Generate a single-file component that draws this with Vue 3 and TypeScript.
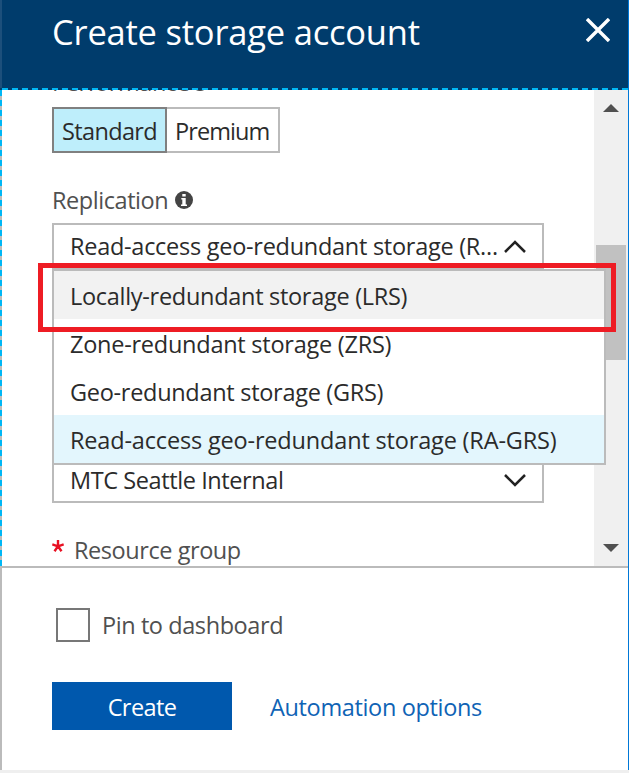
<script setup lang="ts">
import { ref } from 'vue'

interface Option {
  code: string
  label: string
}

const tiers: string[] = ['Standard', 'Premium']
const tier = ref('Standard')
const options: Option[] = [
  { code: 'lrs', label: 'Locally-redundant storage (LRS)' },
  { code: 'zrs', label: 'Zone-redundant storage (ZRS)' },
  { code: 'grs', label: 'Geo-redundant storage (GRS)' },
  { code: 'ragrs', label: 'Read-access geo-redundant storage (RA-GRS)' },
]
const selected = ref('ragrs')
const hovered = ref('lrs')
const pinned = ref(false)
</script>

<template>
  <main class="blade">
    <header class="header">
      <h1 class="title">Create storage account</h1>
      <svg class="close" viewBox="0 0 24 24" width="24" height="24">
        <path d="M1 1L23 23M23 1L1 23" fill="none" stroke="#fff" stroke-width="3.4" />
      </svg>
    </header>
    <div class="dash-top"></div>

    <section class="body">
      <div class="edge"></div>
      <div class="form">
        <div class="label performance">
          <span class="t-performance">Performance</span>
          <svg class="info" viewBox="0 0 18 18" width="18" height="18">
            <circle cx="9" cy="9" r="9" fill="#444" />
            <path d="M7.3 3h3.4v2.6H7.3zM6.3 7h4.4v6.6H12V15H6v-1.4h1.3V8.4h-1z" fill="#fff" />
          </svg>
        </div>
        <div class="tiers">
          <button
            v-for="t in tiers"
            :key="t"
            class="tier"
            :class="[t.toLowerCase(), { active: t === tier }]"
            @click="tier = t"
          >{{ t }}</button>
        </div>
        <div class="label replication">
          <span class="t-replication">Replication</span>
          <svg class="info" viewBox="0 0 18 18" width="18" height="18">
            <circle cx="9" cy="9" r="9" fill="#444" />
            <path d="M7.3 3h3.4v2.6H7.3zM6.3 7h4.4v6.6H12V15H6v-1.4h1.3V8.4h-1z" fill="#fff" />
          </svg>
        </div>
        <div class="select open">
          <span class="t-current">Read-access geo-redundant storage (R...</span>
          <svg class="chevron" viewBox="0 0 22 13" width="22" height="13">
            <path d="M1 12L11 2L21 12" fill="none" stroke="#222" stroke-width="2.5" />
          </svg>
          <ul class="menu">
            <li
              v-for="o in options"
              :key="o.code"
              class="option"
              :class="[o.code, { hovered: o.code === hovered, selected: o.code === selected }]"
              @click="selected = o.code"
            >{{ o.label }}</li>
          </ul>
          <div class="highlight"></div>
        </div>
        <div class="select subscription">
          <span class="t-mtc">MTC Seattle Internal</span>
          <svg class="chevron" viewBox="0 0 22 13" width="22" height="13">
            <path d="M1 1L11 11L21 1" fill="none" stroke="#222" stroke-width="2.5" />
          </svg>
        </div>
        <div class="label group">
          <svg class="star" viewBox="0 0 12 12" width="12" height="12">
            <path d="M6 6.3V0M6 6.3L.3 4.3M6 6.3L11.7 4.3M6 6.3L2.5 11.2M6 6.3L9.5 11.2" fill="none" stroke="#e81123" stroke-width="2.4" />
          </svg>
          <span class="t-group">Resource group</span>
        </div>
      </div>
      <div class="scrollbar">
        <svg class="arrow" viewBox="0 0 16 8" width="16" height="8"><path d="M0 8L8 0L16 8z" fill="#505050" /></svg>
        <div class="track"><div class="thumb"></div></div>
        <svg class="arrow" viewBox="0 0 16 8" width="16" height="8"><path d="M0 0L8 8L16 0z" fill="#505050" /></svg>
      </div>
    </section>

    <footer class="footer">
      <label class="pin">
        <input v-model="pinned" class="box" type="checkbox" />
        <span class="t-pin">Pin to dashboard</span>
      </label>
      <div class="actions">
        <button class="create">Create</button>
        <a class="automation">Automation options</a>
      </div>
    </footer>
  </main>
</template>

<style>
body {
  margin: 0;
  background: #efefef;
}
</style>

<style scoped>
.blade {
  box-sizing: border-box;
  width: 629px;
  height: 770px;
  border-right: 1px solid #0078d7;
  background: #fff;
  display: flex;
  flex-direction: column;
  overflow: hidden;
  font-family: "Open Sans", "Noto Sans", sans-serif;
  font-size: 23.5px;
  color: #2b2b2b;
}
button {
  font: inherit;
  color: inherit;
  margin: 0;
  padding: 0;
}
svg {
  flex: none;
}
.header {
  box-sizing: border-box;
  height: 88px;
  flex: none;
  background: #003c6c;
  border-left: 2px solid #1c4f7b;
  display: flex;
  justify-content: space-between;
  align-items: flex-start;
  padding: 0 18px 0 50px;
}
.title {
  margin: 0;
  padding-top: 7px;
  font-size: 34.5px;
  line-height: 50px;
  font-weight: 400;
  letter-spacing: -0.21px;
  color: #fff;
  white-space: nowrap;
}
.close {
  margin-top: 18px;
}
.dash-top {
  height: 2px;
  flex: none;
  background: repeating-linear-gradient(90deg, #00b7f5 0 6px, #003c6c 6px 10px) 2px 0;
}
.body {
  height: 476px;
  flex: none;
  display: flex;
  overflow: hidden;
}
.edge {
  width: 2px;
  flex: none;
  background: repeating-linear-gradient(180deg, #00b7f5 0 6px, #bbb 6px 10px);
}
.form {
  width: 542px;
  box-sizing: border-box;
  padding-left: 50px;
  margin-right: 50px;
  flex: none;
}
.label {
  display: flex;
  align-items: center;
  color: #505050;
  white-space: nowrap;
  line-height: 32px;
  letter-spacing: -0.44px;
}
.performance {
  margin-top: -24px;
  height: 32px;
  gap: 7px;
}
.t-performance {
  width: 132px;
}
.tiers {
  margin-top: 9px;
  display: flex;
}
.tier {
  box-sizing: border-box;
  height: 46px;
  border: 2px solid #bbb;
  background: #fff;
  text-align: left;
  white-space: nowrap;
}
.tier.standard {
  width: 115px;
  padding: 2px 0 0 8px;
  letter-spacing: -0.64px;
}
.tier.premium {
  width: 113px;
  border-left: 0;
  padding: 2px 0 0 8px;
  letter-spacing: -0.92px;
}
.tier.active {
  background: #beeefb;
  border-color: #808080;
}
.replication {
  margin-top: 31px;
  height: 32px;
  gap: 7px;
}
.replication .t-replication {
  width: 116px;
}
.select {
  box-sizing: border-box;
  width: 492px;
  height: 46px;
  border: 2px solid #bbb;
  background: #fff;
  display: flex;
  justify-content: space-between;
  align-items: center;
  padding: 0 16px;
  white-space: nowrap;
}
.open {
  position: relative;
  margin-top: 7px;
}
.t-current {
  letter-spacing: -0.27px;
}
.t-mtc {
  letter-spacing: -0.41px;
}
.menu {
  position: absolute;
  z-index: 2;
  left: -2px;
  top: 44px;
  box-sizing: border-box;
  width: 554px;
  margin: 0;
  padding: 0;
  list-style: none;
  background: #fff;
  border: 2px solid #bbb;
}
.option {
  height: 46px;
  line-height: 46px;
  padding: 2px 0 0 16px;
  letter-spacing: -0.29px;
}
.option.zrs {
  letter-spacing: -0.25px;
}
.option.ragrs {
  letter-spacing: -0.17px;
}
.option.hovered {
  background: #f2f2f2;
}
.option.selected {
  background: #e3f6fd;
}
.highlight {
  position: absolute;
  z-index: 3;
  left: -16px;
  top: 38px;
  box-sizing: border-box;
  width: 578px;
  height: 69px;
  border: 5px solid #ee1c24;
}
.subscription {
  margin-top: 188px;
}
.group {
  margin-top: 31px;
  height: 32px;
  gap: 10px;
}
.star {
  margin-top: -9px;
}
.scrollbar {
  width: 34px;
  box-sizing: border-box;
  flex: none;
  background: #f0f0f0;
  display: flex;
  flex-direction: column;
  align-items: center;
  padding: 14px 0;
}
.track {
  flex: 1;
  padding-top: 133px;
}
.thumb {
  width: 30px;
  height: 115px;
  background: #c1c1c1;
}
.footer {
  flex: 1;
  border-top: 2px solid #bbb;
  border-left: 2px solid #bbb;
  padding: 40px 0 0 50px;
}
.pin {
  display: flex;
  align-items: center;
  height: 34px;
  padding-left: 4px;
  gap: 12px;
  color: #505050;
  white-space: nowrap;
  letter-spacing: -0.42px;
}
.box {
  appearance: none;
  box-sizing: border-box;
  width: 34px;
  height: 34px;
  margin: 0;
  border: 2px solid #777;
  background: #fff;
}
.actions {
  margin-top: 40px;
  display: flex;
  align-items: center;
  gap: 38px;
}
.create {
  width: 180px;
  height: 48px;
  padding-top: 2px;
  border: 0;
  background: #0058ad;
  color: #fff;
  letter-spacing: -0.6px;
}
.automation {
  padding-top: 2px;
  color: #0f63b5;
  white-space: nowrap;
  letter-spacing: -0.35px;
}
</style>
